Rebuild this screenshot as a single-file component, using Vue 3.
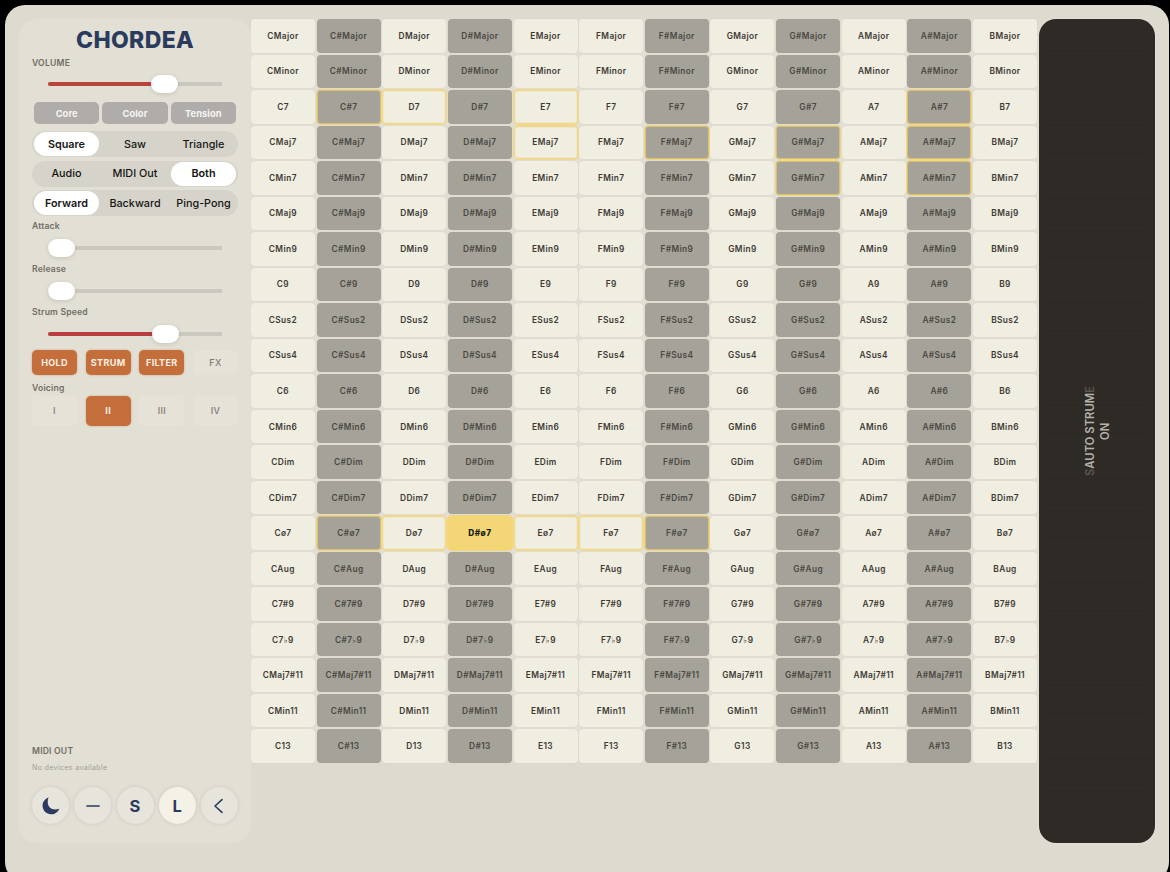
<template>
  <div class="app-shell">
    <aside class="sidebar">
      <h1 class="title">CHORDEA</h1>
      <div class="label volume-label">VOLUME</div>
      <div class="slider volume">
        <span class="fill" :style="{ width: volume + 'px' }"></span>
        <span class="thumb"></span>
      </div>

      <div class="filters">
        <button v-for="name in ['Core', 'Color', 'Tension']" :key="name" class="filter-btn">{{ name }}</button>
      </div>

      <div class="segments">
        <div v-for="group in segments" :key="group.options[0]" class="segment">
          <button
            v-for="option in group.options"
            :key="option"
            class="segment-btn"
            :class="{ active: option === group.active }"
            @click="group.active = option"
          >{{ option }}</button>
        </div>
      </div>

      <div v-for="s in sliders" :key="s.label" class="slider-block">
        <div class="label">{{ s.label }}</div>
        <div class="slider">
          <span class="fill crimson" :style="{ width: s.value + 'px' }"></span>
          <span class="thumb"></span>
        </div>
      </div>

      <div class="toggles">
        <button
          v-for="t in toggles"
          :key="t.label"
          class="toggle"
          :class="{ on: t.on }"
          @click="t.on = !t.on"
        >{{ t.label }}</button>
      </div>

      <div class="label voicing-label">Voicing</div>
      <div class="toggles voicing">
        <button
          v-for="v in ['I', 'II', 'III', 'IV']"
          :key="v"
          class="toggle"
          :class="{ on: v === voicing }"
          @click="voicing = v"
        >{{ v }}</button>
      </div>

      <div class="sidebar-bottom">
        <div class="label">MIDI OUT</div>
        <div class="devices">No devices available</div>
        <div class="round-buttons">
          <button class="round">
            <svg width="18" height="18" viewBox="0 0 18 18">
              <path d="M6.6 0.6 C2.9 2 0.6 5 0.6 8.8 C0.6 13.6 4.3 17.3 9.1 17.3 C12.9 17.3 16 15.2 17.3 11.7 C16 12.3 14.7 12.5 13.3 12.5 C8.7 12.5 5.7 9.5 5.7 5 C5.7 3.4 6 1.9 6.6 0.6 Z" fill="#2b3b5e" />
            </svg>
          </button>
          <button class="round">
            <svg width="14" height="14" viewBox="0 0 14 14">
              <path d="M1 7 H13" stroke="#2b3b5e" stroke-width="1.7" stroke-linecap="round" />
            </svg>
          </button>
          <button class="round">S</button>
          <button class="round selected">L</button>
          <button class="round chevron">
            <svg width="16" height="16" viewBox="0 0 16 16">
              <path d="M11 1.6 L4 8 L11 14.4" fill="none" stroke="#2b3b5e" stroke-width="1.6" stroke-linecap="round" stroke-linejoin="round" />
            </svg>
          </button>
        </div>
      </div>
    </aside>

    <main class="chord-grid">
      <template v-for="type in types" :key="type">
        <button
          v-for="root in roots"
          :key="root + type"
          class="chord"
          :class="{
            sharp: root.length > 1,
            hint: hints[type]?.includes(root),
            playing: root + type === current
          }"
          @click="current = root + type"
        >{{ root }}{{ type }}</button>
      </template>
    </main>

    <section class="strum-plate">
      <span v-for="n in 22" :key="n" class="string"></span>
      <div class="strum-text">
        <div><span class="ghost">S</span>AUTO STRUM<span class="ghost">E</span></div>
        <div>ON</div>
      </div>
    </section>
  </div>
</template>

<script setup>
import { ref, reactive } from 'vue'

const volume = 116
const voicing = ref('II')
const current = ref('D#ø7')

const segments = reactive([
  { options: ['Square', 'Saw', 'Triangle'], active: 'Square' },
  { options: ['Audio', 'MIDI Out', 'Both'], active: 'Both' },
  { options: ['Forward', 'Backward', 'Ping-Pong'], active: 'Forward' }
])

const sliders = [
  { label: 'Attack', value: 12.5 },
  { label: 'Release', value: 12.5 },
  { label: 'Strum Speed', value: 117 }
]

const toggles = reactive([
  { label: 'HOLD', on: true },
  { label: 'STRUM', on: true },
  { label: 'FILTER', on: true },
  { label: 'FX', on: false }
])

const roots = ['C', 'C#', 'D', 'D#', 'E', 'F', 'F#', 'G', 'G#', 'A', 'A#', 'B']
const types = [
  'Major', 'Minor', '7', 'Maj7', 'Min7', 'Maj9', 'Min9', '9', 'Sus2', 'Sus4', '6',
  'Min6', 'Dim', 'Dim7', 'ø7', 'Aug', '7#9', '7♭9', 'Maj7#11', 'Min11', '13'
]

// suggested next chords
const hints = {
  '7': ['C#', 'D', 'E', 'A#'],
  'Maj7': ['E', 'F#', 'G#', 'A#'],
  'Min7': ['G#', 'A#'],
  'ø7': ['C#', 'D', 'E', 'F', 'F#']
}
</script>

<style>
body {
  background: #000;
  overflow: hidden;
}
</style>

<style scoped>
.app-shell {
  box-sizing: border-box;
  width: 1164px;
  height: 877px;
  margin: 5px 0 0 5px;
  padding: 14px;
  display: flex;
  align-items: flex-start;
  background: #dddbd0;
  border-radius: 20px;
  font-family: Inter, "DejaVu Sans", sans-serif;
}

button {
  padding: 0;
  border: none;
  background: none;
  font-family: inherit;
  cursor: pointer;
}

.sidebar {
  box-sizing: border-box;
  flex: none;
  width: 232px;
  height: 824px;
  padding: 8px 13px 19px;
  display: flex;
  flex-direction: column;
  background: #e2dfd4;
  border-radius: 18px;
}

.title {
  margin: 0;
  height: 26px;
  line-height: 26px;
  font-size: 23px;
  font-weight: 800;
  letter-spacing: 0.35px;
  text-align: center;
  color: #2b3b5e;
}

.label {
  height: 12px;
  line-height: 12px;
  font-size: 8.6px;
  font-weight: 600;
  letter-spacing: 0.2px;
  color: #6f6d65;
}

.volume-label {
  margin-top: 4px;
}

.slider {
  width: 174px;
  height: 18px;
  margin-left: 16px;
  display: flex;
  align-items: center;
  background: linear-gradient(#cac8bf, #cac8bf) center / 100% 4px no-repeat;
}

.slider.volume {
  margin-top: 6px;
}

.fill {
  height: 4px;
  border-radius: 2px;
  background: #b8443c;
}

.fill.crimson {
  background: #b83e40;
}

.thumb {
  width: 27px;
  height: 18px;
  margin-left: -13px;
  border-radius: 9px;
  background: #fff;
  box-shadow: 0 1px 4px rgba(0, 0, 0, 0.13);
}

.filters {
  display: flex;
  gap: 3px;
  margin: 9px 2px 0;
}

.filter-btn {
  flex: 1;
  height: 22px;
  border-radius: 5px;
  background: #afacaa;
  color: #f6f5f2;
  font-size: 9.3px;
  font-weight: 700;
  letter-spacing: 0.1px;
}

.segments {
  display: flex;
  flex-direction: column;
  gap: 3.5px;
  margin-top: 7px;
}

.segment {
  height: 26px;
  box-sizing: border-box;
  padding: 1px 2px;
  display: grid;
  grid-template-columns: 65px 1fr 65px;
  border-radius: 13px;
  background: #d6d4ca;
}

.segment-btn {
  border-radius: 12px;
  font-size: 10.8px;
  font-weight: 500;
  color: #161615;
  white-space: nowrap;
}

.segment-btn.active {
  background: #fff;
  font-weight: 600;
}

.slider-block {
  height: 43.2px;
}

.slider-block .slider {
  margin-top: 6.5px;
}

.segments + .slider-block {
  margin-top: 4px;
}

.toggles {
  display: grid;
  grid-template-columns: repeat(4, 45px);
  justify-content: space-between;
}

.toggle {
  height: 25px;
  border-radius: 5px;
  background: #e5e2d8;
  color: #7d7b73;
  font-size: 9.1px;
  font-weight: 500;
  letter-spacing: 0.3px;
}

.toggle.on {
  background: #c46f3b;
  color: #f9eee2;
  font-weight: 700;
  box-shadow: 0 0 2px rgba(196, 111, 59, 0.6);
}

.voicing-label {
  margin-top: 7px;
}

.voicing {
  margin-top: 2px;
}

.voicing .toggle {
  height: 30px;
}

.sidebar-bottom {
  margin-top: auto;
}

.devices {
  margin-top: 6px;
  height: 10px;
  line-height: 10px;
  font-size: 7.2px;
  letter-spacing: 0.28px;
  color: #a19f96;
}

.sidebar-bottom .label {
  padding-top: 1px;
}

.round-buttons {
  display: flex;
  justify-content: space-between;
  margin-top: 14px;
}

.round {
  width: 37px;
  height: 37px;
  display: flex;
  align-items: center;
  justify-content: center;
  border-radius: 50%;
  background: #e7e4dc;
  color: #2b3b5e;
  font-size: 16.5px;
  font-weight: 700;
  box-shadow: 0 0 4px rgba(0, 0, 0, 0.1);
}

.round.chevron {
  box-sizing: border-box;
  padding-right: 2px;
}

.round.selected {
  background: #f4f1e6;
}

.chord-grid {
  flex: none;
  width: 786px;
  height: 744px;
  display: grid;
  grid-template-columns: repeat(12, 1fr);
  grid-template-rows: repeat(21, 1fr);
  gap: 2px 1.7px;
  background: #e1ded3;
}

.chord {
  min-width: 0;
  min-height: 0;
  border-radius: 4px;
  background: #f0ede1;
  color: #3d3a34;
  font-size: 8.3px;
  font-weight: 600;
  letter-spacing: 0.4px;
  white-space: nowrap;
  box-shadow: 0 0 1px rgba(110, 105, 90, 0.15);
}

.chord.sharp {
  background: #a5a299;
  color: #4b4842;
}

.chord.hint {
  box-shadow: 0 0 0 1px #f1d88e, inset 0 0 0 1.2px #f0d88f;
}

.chord.sharp.hint {
  box-shadow: 0 0 0 1px #eed68c, inset 0 0 0 1px #dcc071;
}

.chord.playing {
  background: #f3d777;
  color: #201b0c;
  font-weight: 800;
  box-shadow: 0 0 0 1px #f3d777;
}

.strum-plate {
  position: relative;
  box-sizing: border-box;
  flex: none;
  width: 116px;
  height: 824px;
  margin-left: 2px;
  padding: 33px 5px 0;
  border-radius: 17px;
  background: #2e2a26;
  box-shadow: 0 0 2px rgba(255, 255, 255, 0.5);
}

.string {
  display: block;
  height: 2px;
  margin-bottom: 33px;
  background: #302c28;
}

.strum-text {
  position: absolute;
  left: 44px;
  top: 366px;
  height: 92px;
  writing-mode: vertical-rl;
  transform: rotate(180deg);
  text-align: center;
  font-size: 11.3px;
  line-height: 15px;
  font-weight: 600;
  color: #b5b2ac;
  white-space: nowrap;
}

.ghost {
  color: #5a5651;
}
</style>
